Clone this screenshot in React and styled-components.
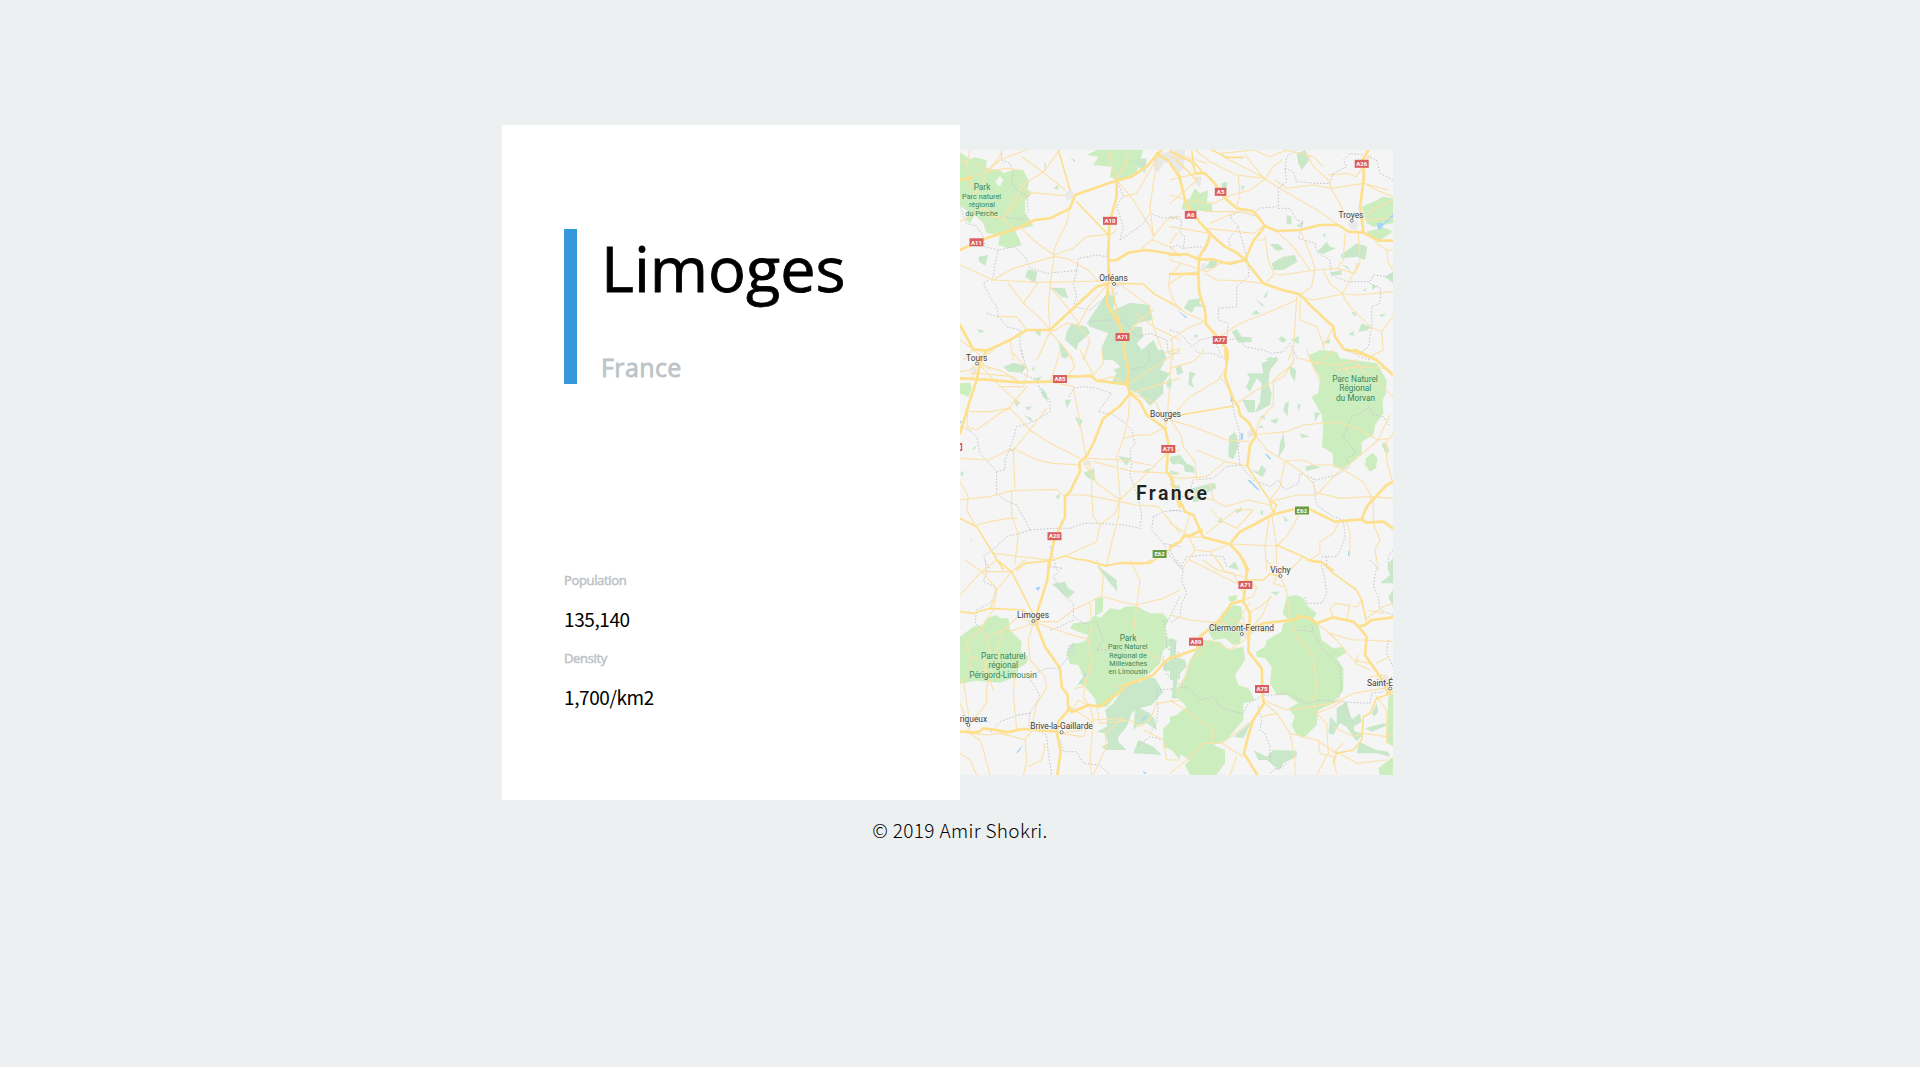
import React from "react";
import styled, { createGlobalStyle } from "styled-components";

const GlobalStyle = createGlobalStyle`
  *, *::before, *::after { box-sizing: border-box; }
  body {
    margin: 0;
    background: #ecf0f1;
    color: #000;
    font-family: "Noto Sans CJK JP", "Open Sans", sans-serif;
  }
`;

const Page = styled.main`
  display: flex;
  flex-direction: column;
  align-items: center;
  min-height: 1067px;
  padding-top: 125px;
`;

const Showcase = styled.section`
  display: flex;
  align-items: center;
  width: 916px;
`;

const Card = styled.article`
  display: flex;
  flex-direction: column;
  justify-content: space-between;
  width: 458px;
  height: 675px;
  padding: 104px 62px 77px;
  background: #fff;
`;

const Heading = styled.header`
  display: flex;
  flex-direction: column;
  justify-content: space-between;
  height: 155px;
  padding-left: 24px;
  border-left: 13px solid #3498db;
`;

const City = styled.h1`
  margin: 0;
  font-family: "Open Sans", sans-serif;
  font-size: 63px;
  font-weight: 400;
  line-height: 78px;
  -webkit-text-stroke: 0.8px #000;
`;

const Country = styled.h2`
  margin: 0;
  color: #bdc3c7;
  font-family: "Open Sans", sans-serif;
  font-size: 25px;
  font-weight: 400;
  line-height: 33px;
  letter-spacing: 0.4px;
  -webkit-text-stroke: 0.8px #bdc3c7;
`;

const Facts = styled.dl`
  margin: 0;
`;

const Label = styled.dt`
  height: 39px;
  color: #bdc3c7;
  font-family: "Open Sans", sans-serif;
  font-size: 13px;
  font-weight: 400;
  line-height: 26px;
  letter-spacing: -0.35px;
  -webkit-text-stroke: 0.5px #bdc3c7;
`;

const Value = styled.dd`
  height: 39px;
  margin: 0;
  font-size: 19px;
  font-weight: 400;
  line-height: 26px;
  letter-spacing: -0.4px;
`;

const Footer = styled.footer`
  padding-top: 15px;
  font-size: 19px;
  font-weight: 300;
  line-height: 30px;
  letter-spacing: 0.35px;
`;

const MapFrame = styled.svg`
  display: block;
  width: 433px;
  height: 625px;
  background: #f5f5f5;
  font-family: Roboto, sans-serif;
`;

const Fill = styled.path`
  fill: ${(p) => p.$tone};
`;

const Road = styled.path`
  fill: none;
  stroke: ${(p) => (p.$major ? "#fddf8c" : "#fbe2ab")};
  stroke-width: ${(p) => p.$w};
  stroke-linejoin: round;
  stroke-linecap: round;
`;

const Border = styled.path`
  fill: none;
  stroke: #c6c6cc;
  stroke-width: 3;
  stroke-dasharray: 5 5;
  stroke-linejoin: round;
`;

const MapText = styled.text`
  fill: ${(p) => (p.$park ? "#38875a" : "#3c3c3c")};
  stroke: ${(p) => (p.$park ? "none" : "#f7f7f7")};
  stroke-width: 0.8px;
  paint-order: stroke;
  font-size: ${(p) => p.$size || 8.4}px;
  text-anchor: middle;
`;

const CountryText = styled.text`
  fill: #222;
  stroke: #fafafa;
  stroke-width: 1px;
  paint-order: stroke;
  font-size: 19.5px;
  font-weight: 600;
`;

const ShieldText = styled.text`
  fill: #fff;
  font-size: 6px;
  font-weight: 700;
  text-anchor: middle;
`;

// Survey sheets: each is drawn at three units to the pixel from its own origin.
const sheets = [
  {
    x: -10, y: -10,
    park: "M30 38L62 58L75 52L110 60L108 85L150 90L160 100L190 90L220 90L237 125L232 150L245 155L240 168L225 180L225 220L240 240L250 258L195 270L215 315L175 325L145 315L150 285L110 280L100 250L75 225L60 250L48 240L55 215L30 195ZM150 108L135 125L150 140L160 120ZM410 45L440 30L580 30L560 95L510 125L480 110L485 80L430 75L445 50Z",
    forest: "M85 350L115 345L105 378L88 365ZM235 388L262 395L255 430L225 410ZM303 443L345 445L355 475L335 470ZM430 520L470 460L495 470L490 510L540 488L600 495L607 540L560 550L545 560L575 560L580 590L560 610L575 630L610 600L640 660L460 660L455 620L475 580L420 560L410 550ZM365 550L410 560L420 580L385 610L380 630L345 600L350 575ZM325 600L358 645L335 655ZM255 575L275 565L270 590ZM80 568L105 572L90 580ZM310 143L325 135L325 150ZM282 70L288 70L286 95ZM545 60L590 55L585 100Z",
    urban: "M345 160L365 148L375 175L350 182ZM490 432L525 425L520 440L495 442ZM610 45L660 35L690 30L690 60L640 70L625 97L612 90ZM486 458L505 452L502 470Z",
    water: "M412 492L435 465L430 472ZM355 550L372 545ZM360 52L376 62L374 65Z",
    major: "M30 330L100 298L210 262L255 240L300 235L360 205L375 165L480 128L545 110L590 80L625 40L635 30M500 118L500 170L478 250L475 350L475 430L470 490L510 560L522 600L522 660M475 430L440 440L305 565L300 570L230 570L180 600L110 632L70 628L30 555M475 362L500 360L535 338L590 330L690 345M620 40L660 65L690 110M30 120L62 112",
    mid: "M325 30L360 150M380 185L475 285M475 430L580 432L610 460L690 505M485 440L500 510L510 560M475 370L485 430",
    minor: "M30 58L50 70L60 30M60 30L50 80L62 112L60 150M215 50L280 97L345 150M75 65L110 95L150 50L155 30M110 95L90 150L60 170M110 95L150 60L215 35L230 30M110 95L170 85L210 90M60 112L110 95M170 215L225 130L280 97L325 35M120 230L160 235L215 175L240 158L345 167M205 130L240 158M30 245L100 205L160 240L195 265M360 200L350 250L320 310L310 340L312 350M215 265L250 300L290 330L312 345M312 350L190 385L125 422M312 350L350 355L415 390L445 425M312 345L370 325L410 290L475 283M30 375L130 420L265 427L470 423M312 350L300 440L295 500L300 570M175 430L220 490L265 530L300 570M220 490L265 427M300 440L350 500L380 540L385 560M475 430L415 500L385 555L350 550L305 575M525 30L530 70L500 115M480 30L485 80L500 115M625 45L610 130L600 200L610 290L650 240L690 230M520 170L560 160L620 55M500 120L550 180L600 260L610 290M610 295L570 330M605 300L660 320L690 350M690 375L660 405L655 440L670 480L690 510M500 270L475 290M520 440L600 500L610 560L690 600M180 600L190 660M300 575L280 620L260 660M300 575L340 620L370 660M230 570L200 530L145 530M30 600L70 628L105 660M40 660L70 628M385 555L420 600L400 660M560 520L610 560L640 640L690 625M525 590L570 540L610 510",
    border: "M155 40L155 60L180 70L190 100L185 130L205 155L230 165L235 215L215 240L160 230L135 240M30 200L50 250L80 258L100 290L105 320L145 330L195 320L225 350L240 385L290 400L340 395L380 392L385 355L440 345L470 350L475 300M145 330L135 370L130 410L100 430L120 470L140 500L145 530L110 520M380 392L370 430L380 470L370 500L420 510L480 460L510 430M510 300L520 260L500 200L520 165L500 120M510 300L575 255L600 220L640 235L680 230M145 530L170 560L210 570L210 620L220 660M420 545L470 540L520 540L560 590L600 580L650 600L655 640L690 640",
  },
  {
    x: 210, y: -10,
    park: "M75 145L90 160L115 150L110 190L125 193L128 215L35 208L40 185L60 175ZM575 200L610 185L640 170L669 175L669 250L610 260L590 250ZM590 275L640 262L669 275L620 305L600 290ZM5 50L35 60L30 70L8 65Z",
    forest: "M380 40L405 30L418 60L395 90L385 70ZM155 130L172 125L168 155L155 150ZM213 135L225 140L216 152ZM350 225L365 230L365 255L350 250ZM378 258L400 243L395 262ZM300 312L325 312L342 328L320 333ZM305 370L340 350L375 345L382 365L340 390L310 390ZM442 335L470 305L480 320L498 325L460 342ZM512 345L560 310L592 320L585 360L560 350L515 355ZM457 285L468 278L465 293ZM515 375L530 378L545 395ZM480 398L515 390L515 405L485 405ZM645 410L669 395L669 430ZM105 385L120 362L145 362L135 385ZM42 505L55 480L90 475L88 492L115 500L75 500L65 518ZM280 470L295 450L288 475ZM255 475L285 498L275 498ZM243 525L258 510L272 522ZM185 575L200 567L215 590L245 592L245 605L205 608ZM325 598L335 588L350 600L338 608ZM362 600L386 588L387 612ZM565 575L575 550L602 562L590 572ZM535 583L550 573L553 588ZM455 610L480 595L480 610ZM543 515L560 518L555 530ZM627 525L650 520L635 532ZM605 435L622 438L608 450ZM576 452L590 443L587 454ZM68 587L84 583L82 594ZM555 370L568 372L560 375ZM417 645L450 632L500 640L500 660L420 660ZM285 660L300 650L325 658Z",
    urban: "M15 30L45 30L40 90L20 100L0 70L0 45ZM75 110L95 110L90 145L78 130ZM535 250L565 240L560 270L540 265ZM95 372L108 368L105 395L93 390Z",
    water: "M622 248L640 250L669 222L669 235L645 250L630 270L622 265ZM20 510L52 532L48 535Z",
    major: "M0 70L28 110L48 190L90 248L130 290L165 320L200 338L225 360L280 430L330 448L390 463L430 505L490 560L495 590L522 628L560 635L620 660M75 100L105 100L130 125L165 175L200 205L250 213L285 258L320 273L390 270L450 255L505 255L535 275L580 278L625 302L669 302M285 258L250 303L225 360L180 372L125 358L85 358L50 342L0 345M118 290L110 315L88 350L85 400L88 460L105 510L108 552L150 600L172 630L173 660M595 30L578 60L582 110L570 200L580 275M0 402L85 402",
    mid: "M0 35L75 70L100 100M65 30L75 100M125 30L170 52L220 52M20 60L80 120",
    minor: "M0 50L60 60L80 100L0 120M0 30L30 45L110 70M75 30L120 65L200 105L285 115M160 50L285 115M155 40L250 30L300 50L350 30M285 118L225 45M285 118L310 80L335 60M285 118L330 145L405 190L450 215L505 255M170 170L240 150L285 118M205 110L210 160L200 200M0 190L60 140L80 120M0 165L50 180L130 190L165 175M105 215L200 215L265 225L280 250M20 280L0 310M120 280L0 260M110 270L120 300L105 330M120 250L200 215M110 265L250 280L280 258M350 145L430 135L485 145L580 130L655 150M350 145L315 120M485 150L510 190L530 240M485 150L475 120L430 80L410 40M475 105L530 100L560 110L600 45M582 130L620 150L669 170M345 30L430 50L460 80M580 240L669 235M669 180L600 215L570 240M390 270L420 340L435 385L425 440L390 465M320 275L370 320L420 390M285 290L295 360L310 400L330 405M285 300L265 300M310 405L290 425M330 405L440 390L500 385L520 360L525 280M565 280L570 370L555 400L500 385M565 370L540 420L518 460M460 392L480 430L518 462L560 465L669 455M518 462L430 480L390 470M669 330L650 330L620 310M650 330L655 370L669 390M105 400L140 420L210 422L280 430M110 395L150 370L225 360M0 360L50 375L110 395M0 485L50 520L105 545M150 590L210 550L300 515L380 480M380 470L375 560L370 620L355 660M390 480L390 540L440 560L455 600L470 660M490 560L460 620M518 465L540 500L600 560L635 575L640 630L600 650L560 640M635 575L669 530M0 600L60 560L105 545M10 660L5 600M0 430L45 400L90 395",
    border: "M380 30L350 50L345 85L370 95L380 125L440 130L480 130L490 100L530 80L520 60L540 40L580 45L620 60L630 100L669 120M345 85L350 125L325 145L325 200L265 205L250 230L215 210L180 230L205 260L175 300L180 320M325 205L360 205L380 240L400 245L385 295L435 310L440 335L480 360L485 405L530 425L600 425L610 405L650 410L669 400M600 430L632 445L630 490L605 500L605 560L595 620L570 640M0 230L35 240L30 280L45 290L40 325L90 320L110 325M0 325L20 315L40 325M205 260L235 370L235 410L200 440L200 500L145 505L145 540L175 550L170 600L210 595L225 620L280 630L305 640L340 635L360 610L385 660M0 570L30 580L65 620L90 600L130 590L150 640L165 660",
  },
  {
    x: -10, y: 200,
    park: "M30 100L60 98L65 115L55 140L30 130Z",
    forest: "M488 30L515 0L640 0L650 25L630 60L660 70L640 100L640 130L600 168L565 130L545 122L530 110L520 100L485 95L500 70L490 60L512 50ZM160 50L190 38L232 48L215 68L175 65ZM340 10L355 18L345 28ZM455 0L475 0L470 10ZM272 110L290 130L295 155L278 140ZM345 150L365 148L350 175ZM375 200L398 210L390 235ZM190 148L210 155L200 172ZM222 195L245 205L245 217ZM225 172L245 168L235 182ZM505 318L542 325L530 347ZM400 370L432 355L435 392L415 385ZM315 440L330 430L327 448ZM580 362L603 355L590 367ZM658 330L690 315L690 335L670 345ZM650 95L662 80L662 112L650 112ZM245 55L255 50L252 65ZM65 300L75 287L78 295ZM30 370L42 362L38 380ZM175 300L200 293L185 305ZM660 365L685 365L670 375ZM658 400L690 408L690 440ZM250 85L275 80L265 95ZM440 650L455 655L450 660Z",
    urban: "M398 335L420 330L425 345L400 345ZM60 55L80 50L75 75Z",
    water: "M30 212L35 215L30 222ZM60 570L66 570L64 574Z",
    major: "M110 0L90 40L80 90L60 150L30 250M30 85L100 88L205 97L300 95L350 80L425 78L440 92L530 103M522 0L535 60L532 105L540 130L570 155L590 195L645 235L655 280L650 365L668 390L670 420L690 470M540 130L510 168L460 205L430 280L410 318L388 338L390 365L360 425L345 440L345 500L312 570L295 660",
    mid: "M30 505L80 530L160 660M200 660L225 640L300 632L345 618L380 628L405 630L465 648L510 638L600 640L690 575M690 190L660 195M330 85L420 75",
    minor: "M30 65L60 60L85 35L130 0M60 70L90 70L190 80L205 95M95 45L160 65L205 97M80 35L150 110L210 160M150 110L220 110L235 60L190 10M60 185L120 185L175 175L230 110M55 160L50 230L80 240L150 190L180 175M180 175L240 240L300 280L390 325M30 325L115 330L175 300L200 300M195 420L190 300L240 240L290 175M200 300L260 330L310 340L390 345M410 330L370 110L300 95L320 40L330 0M410 330L440 400L510 450M415 325L520 330L600 345M430 335L550 365L690 370M520 265L560 255L600 255L640 235M540 130L535 200L520 265L500 320L510 440L505 500L480 600L470 650M405 340L425 380L425 430L430 500L450 525L495 490L510 450M345 435L400 435L430 440L510 455L555 465L625 470L690 550M345 440L320 418L185 422L120 440L30 450M30 395L55 440L50 480L75 525M80 525L120 515L175 505L200 505M185 422L185 500L205 550L195 640M510 450L560 400L650 310L690 300M430 75L460 40L455 0M390 0L430 75M350 80L375 50L350 0M130 610L210 620L300 630M345 618L440 575L450 525M530 105L600 60L690 0M540 130L690 85M665 0L660 100L650 220M545 130L620 160L650 235M450 90L490 80L530 100M80 60L60 90M85 30L120 60M30 230L60 240",
    border: "M215 0L225 40L215 70L260 90L275 130L300 150L300 185L260 210L235 220L200 230L185 280L165 330L165 360L140 365L110 330L90 310L80 260L50 235M140 365L140 430L165 450L200 465L230 520L240 540L210 550L170 560L140 590L100 620L120 660M240 540L310 535L340 535L360 535L400 520L450 520L520 525L570 535L575 490L560 430L540 375L545 340L540 300L555 280L545 240L520 215L490 195L445 185L470 150L485 130L440 115L400 110L370 115L355 145M610 500L640 485L690 480M610 500L605 540L640 580L690 590M640 580L660 620L690 650M300 590L310 620L320 660M535 60L580 50L600 30L595 0",
  },
  {
    x: 210, y: 200,
    park: "M415 20L450 0L500 5L510 25L550 30L620 40L650 90L648 130L638 150L640 190L615 225L610 255L575 275L575 310L520 360L490 350L488 310L455 290L460 240L455 195L425 140L445 130L450 80L430 50ZM588 325L608 308L622 325L618 355L600 365L585 345ZM655 640L669 625L669 660L655 655Z",
    forest: "M275 40L320 20L325 30L300 60L295 100L305 130L300 165L255 188L270 155L275 100L260 85L240 125L228 110L240 85L230 70L280 70ZM217 150L255 150L255 185L235 188ZM358 45L378 60L375 95L362 75ZM345 160L357 152L352 200L340 180ZM268 200L283 195L285 210ZM300 212L326 203L318 222ZM270 225L283 232L268 235ZM433 185L450 190L435 215ZM382 160L392 165L385 185ZM185 190L175 240L178 225ZM177 260L195 245L202 260L205 290L190 328L175 322ZM340 245L345 290L325 325L330 280ZM390 250L420 260L395 263ZM405 350L425 345L455 352L410 363ZM243 360L265 365L275 345L288 360L278 382ZM0 320L30 315L50 340L72 350L75 368L45 365L40 345L0 335ZM65 415L135 398L138 415L95 435L85 455L68 455L75 430ZM18 55L30 45L40 68L22 75ZM58 65L77 70L65 90L72 115L55 103ZM195 485L215 470L215 482L200 490ZM142 515L155 500L155 520ZM268 485L280 480L278 497ZM338 495L355 512L345 515ZM175 650L195 635L207 660ZM635 285L642 275L658 300L650 315ZM0 75L5 100L0 120ZM0 360L25 370L20 375L0 370Z",
    urban: "M230 245L255 235L260 255L235 263Z",
    water: "M150 78L165 45L160 55ZM182 130L188 130L192 155L182 155ZM212 250L220 250L218 270L212 270ZM285 312L292 313L305 328L298 328ZM232 390L240 390L272 422L260 418ZM534 602L538 602L538 618L534 618Z",
    major: "M165 0L170 40L165 80L190 150L205 170L210 195L238 220L258 258L240 285L232 348M0 375L15 420L45 485L70 495L100 562L150 575L180 582L210 615L235 660M555 0L620 30L669 75M0 590L30 575L40 560L65 555L95 540M575 508L590 518L640 515L669 535M185 575L210 545L250 525L305 495L370 478M420 478L495 515L575 508L590 470L650 405L669 395",
    mid: "M0 200L190 168M232 348L265 400L300 452L320 465L310 490L300 455M400 620L425 635L455 638L490 660M320 585L400 620",
    minor: "M0 205L60 140L145 90L165 60M0 55L70 35L95 10L100 0M0 210L70 230L170 270L240 275M35 265L40 290L75 335L80 390M0 205L35 260M0 380L30 385L110 380L165 335L232 348M165 335L80 300M240 255L350 245L400 225L500 215L560 235L625 270M258 255L265 215L310 165L310 90L370 40L370 0M200 160L260 120L340 80L370 35M410 0L430 50L450 90M390 25L440 40L470 20L490 0M440 40L500 45L560 30M510 40L560 90M555 30L575 60L620 95L669 140M500 60L560 50L650 55M258 258L290 300L345 333L400 330L430 345L490 345L520 360M345 333L330 410L300 450M345 333L400 370L430 400L440 435M440 435L500 370L560 325L625 270M520 360L580 395L605 440L590 480M450 430L510 445L605 440L669 445M300 455L380 435L440 435M625 270L660 265L669 250M650 270L650 330L660 370L669 400M120 400L130 450L165 470L235 450L300 465M55 420L90 440L130 450M125 480L150 510L200 535L250 480L200 478L110 550M0 520L55 555L75 600L120 605L180 582M180 582L320 588L350 560L385 500L370 480M300 490L285 590L290 660M305 490L318 580L320 640M400 620L360 660M510 510L490 550L450 575L450 610L420 630M530 515L540 550L540 620M610 440L610 520L630 570L615 600L625 660M660 195L640 235L625 270M100 562L40 560L60 490M75 600L35 660M120 605L150 640L160 660",
    border: "M75 0L90 10L130 10L155 25M150 80L180 120L195 200L210 250L205 300L210 345L170 350L130 385L70 390L55 440L0 440M210 345L250 390L300 410L325 390L345 420L385 400L390 370L430 385L435 440L440 465L490 500L520 510L525 560L515 590L500 620L455 620M435 390L500 375L540 350L530 325L560 310L520 260L545 200L570 190L600 170L610 195L640 200L660 230M0 480L40 485L55 490M0 600L20 640L30 655L50 620L110 615L160 620L170 650M470 620L470 660M669 600L655 620L655 660M530 0L570 20L600 30",
  },
  {
    x: -10, y: 410,
    park: "M30 230L70 200L100 195L110 175L140 165L150 175L175 175L180 210L215 245L212 275L235 290L230 310L205 325L200 350L150 368L75 362L30 372ZM435 115L460 112L458 155L435 168ZM370 190L415 185L435 165L450 175L480 145L510 150L525 140L560 138L580 150L600 160L640 160L655 180L645 205L650 230L670 250L640 270L630 310L600 340L560 365L530 370L500 405L470 440L440 440L435 415L405 380L385 370L400 350L385 315L360 312L350 280L365 250L385 250L410 240L415 225L385 215L360 205ZM640 505L690 460L690 600L665 570L640 560Z",
    forest: "M305 72L345 65L355 85L375 95L355 115ZM440 15L500 60L502 95L480 70ZM365 255L378 253L372 282L350 280ZM530 370L575 365L590 350L615 355L640 395L605 435L570 445L600 460L615 480L620 510L590 490L565 495L550 510L555 450L545 460L530 500L505 530L505 545L530 570L470 570L455 560L475 550L465 520L440 515L470 500L470 470L465 450L490 430ZM565 540L610 560L635 585L550 580ZM640 300L690 310L690 360L665 335L640 330ZM665 385L690 385L690 415L672 415Z",
    urban: "M235 185L265 178L265 195L245 200ZM298 502L325 505L325 520L300 518Z",
    water: "M258 82L272 80L265 92L258 88ZM380 380L402 350L395 365ZM195 582L218 555L210 572ZM570 488L592 462L588 475ZM578 632L592 640L583 642ZM400 345L412 340L405 350Z",
    major: "M298 0L292 60L262 155L258 190L285 260L330 325L335 380L353 405L355 450L325 485L320 515L332 575L322 645M30 515L85 517L100 505L150 512L170 517L220 507L320 515M355 440L365 457L415 435L450 440L510 395L530 375L610 345L640 310L665 290L690 288",
    mid: "M140 0L185 35L258 180M30 155L70 160L120 145L220 150L258 185M405 0L470 17L510 10L580 12L605 0",
    minor: "M30 105L95 35L140 0M45 0L95 35L140 85L120 150M95 35L185 35L225 0M185 35L140 90L130 150L95 200L110 240L120 280L100 340M95 200L50 250L60 290L100 300L130 390M55 260L65 340L30 370M115 230L160 210L205 170L240 185M175 215L210 205L250 190M250 190L235 240L240 300L285 350L290 385L260 430L245 500M262 185L325 185L370 150L455 108M262 190L350 220L415 238L425 310L400 380L375 385M418 235L425 190L420 130M455 108L510 125L560 135L640 115L690 90M455 108L460 50L440 0M560 135L550 220L580 270L610 290L640 300M560 135L570 60L540 0M110 385L110 430L60 490M195 340L190 400L200 510M40 360L60 490M30 430L55 490M60 500L50 515L90 540L100 570L120 645M60 520L115 525L180 515M250 510L225 535L230 605L220 645M230 540L150 520M280 550L285 560L275 600L235 620M325 520L400 530L420 480L350 435M365 457L385 420L410 435M420 440L430 480L520 475M520 475L465 520L470 560L430 645M430 480L400 510L330 520M440 440L450 490L540 480L570 500M430 480L420 600L425 645M30 580L60 600L80 645M30 480L55 490M570 500L600 480L620 430L690 420M580 510L640 540L650 600L690 600M160 210L140 270L110 385M420 310L400 410L415 435M500 380L560 360L600 350",
    border: "M105 0L110 40L100 65L135 80L135 110L120 130L80 150L75 190L110 220M335 25L310 50L340 105L370 130L370 170L400 190L440 185L460 240L440 270L490 270L530 270M300 20L340 25M370 180L330 200L300 210M240 460L270 410L255 380L235 350L290 325L325 325L350 300L355 260L375 250M240 460L205 465L150 485L120 520M205 465L240 460L235 500L290 525L295 580L305 645M330 540L340 575L380 575L400 610L450 615L480 645M640 180L650 220L650 265L690 280M690 110L650 190M640 290L650 345L690 375M620 430L620 390L690 385M600 520L620 490L625 430M640 540L600 530L560 560",
  },
  {
    x: 210, y: 410,
    park: "M350 110L380 105L400 115L410 135L440 160L430 175L445 195L455 240L490 265L520 260L528 278L500 295L520 325L520 390L490 430L445 450L440 495L400 535L380 525L365 495L375 470L355 445L385 430L350 405L320 405L300 370L305 320L285 295L260 290L258 275L285 260L290 240L335 215L340 190L360 185L338 160ZM175 110L200 105L200 120L178 125ZM155 160L190 135L215 140L215 175L205 190L215 220L210 250L190 255L165 235L130 240L115 215L150 180ZM65 290L100 240L150 245L175 270L220 260L225 300L195 345L205 375L235 385L255 420L220 430L220 480L170 540L130 555L165 570L165 610L140 645L60 645L45 615L60 600L0 565L0 470L20 465L50 440L10 400L45 350ZM625 625L669 590L669 645L630 645ZM655 410L669 400L669 560L650 545Z",
    forest: "M0 235L20 240L15 290L45 300L50 320L25 345L15 415L5 415L10 360L0 360ZM250 570L290 590L310 570L380 572L380 590L340 610L330 630L290 600L265 600ZM300 95L328 95L320 107ZM175 22L195 8L200 28ZM655 30L669 0L669 70L630 70L660 45ZM655 110L669 90L669 140ZM500 445L530 425L545 480L570 460L575 485L550 500L555 515L580 520L560 545L530 500L510 490L490 525L475 520L480 470L500 490ZM585 505L640 490L655 495L605 515ZM568 545L620 570L655 575L660 590L620 580L560 580ZM605 460L620 430L625 455L612 470ZM190 530L245 485L220 535Z",
    urban: "M205 205L260 210L235 235L210 230ZM630 340L655 350L655 400L640 390Z",
    water: "",
    major: "M220 0L230 30L228 65L220 125L240 160L235 275L275 325L278 410L282 430L250 480L235 525L222 580L262 645M0 295L80 268L90 230L150 178L185 130L220 122M235 210L280 190L380 178L385 168L420 175L440 190L490 172L550 185L565 200L590 230L585 285L620 335L660 402M565 200L585 195L605 180L669 172",
    mid: "M410 0L455 5L490 40L560 90L575 120L590 190M228 60L280 60L300 42L330 48M660 402L620 415L600 460L580 470L575 540L550 570L500 580L490 610M650 400L669 395M235 210L300 215",
    minor: "M330 45L290 0M330 48L350 90L360 180L380 230L430 290L440 380L430 430L440 460L470 490L475 580L440 645M140 0L165 35L190 40L225 110M100 0L140 30L220 50M60 0L130 35L200 70L225 60M320 50L310 70L340 80M220 120L250 110L260 80L230 60M235 160L270 140L305 110M245 205L280 160L300 110M0 165L60 180L160 190L215 215M180 180L215 190L235 210M165 185L130 200L90 225M235 230L210 250L180 270L120 240L90 280L60 300L45 350L20 400M0 420L60 460L100 490L125 500L130 550L100 550L50 600L0 640M130 550L155 550L220 590M155 550L250 480M200 590L180 645M285 430L320 460L360 520L440 540L500 580M290 425L350 450L430 440L490 430L550 400L640 385M275 470L320 460M440 190L480 220L550 240L585 240M455 200L500 240L550 300L600 310M490 170L480 150L495 130L560 140L575 120M590 175L640 140L669 130M590 150L640 160M530 180L540 130M590 240L669 245M565 285L555 310L600 330M600 350L650 345M620 310L660 290M440 460L490 440L520 420M490 500L550 530L575 520M500 575L560 610L650 600M580 520L650 530L669 520M620 410L650 450L650 550M360 520L375 600L375 645M445 540L450 580L490 590L500 645M0 640L50 600M235 240L225 200L215 160L240 130M490 580L520 550",
    border: "M20 0L40 30L35 60L50 100L35 130L30 170L0 190M455 15L465 60L470 100L455 130L410 130L405 110M380 210L430 215L425 190M430 220L460 270L510 320L515 390L500 425L450 420L410 430L355 400L310 405L280 405L235 430L220 460L190 455L150 440L130 410L90 420L50 380L20 385M500 425L600 430L605 400L640 395M600 0L620 20L610 80L625 110L630 150L669 165M265 440L275 480L270 510L285 520L300 560L300 600L320 630L350 610M525 430L530 460L550 480M655 240L650 280L669 320M0 240L15 250L15 300M300 640L320 625",
  },
];

const shields = [
  [1110, 220.8, "A10"], [976.5, 242.3, "A11"], [1122.5, 337, "A71"], [1220.6, 191.8, "A5"],
  [1190.6, 214.8, "A6"], [1361.7, 163.8, "A26"], [1219.8, 340, "A77"], [1060, 379, "A85"],
  [1168.3, 449, "A71"], [1054.5, 536.2, "A20"], [1245.4, 585, "A71"],
  [1196, 641.7, "A89"], [1262, 689, "A75"],
  [1159.6, 554, "E62", true], [1302, 510.5, "E62", true],
];

const places = [
  ["Orléans", 1113.5, 280.5, 1114, 284], ["Troyes", 1351, 218.3, 1351.7, 220.5],
  ["Tours", 976.7, 360.5, 977, 363.5], ["Bourges", 1165.5, 416.5, 1166, 419.5],
  ["Limoges", 1033, 617.6, 1033.3, 621], ["Vichy", 1280.4, 572.6, 1280.4, 576],
  ["Clermont-Ferrand", 1241.5, 630.9, 1241.8, 634], ["Brive-la-Gaillarde", 1061.5, 728.6, 1061.6, 732.3],
  ["rigueux", 973.4, 721.8, 968.4, 725], ["Saint-É", 1380, 685.5, 1390.3, 688.5],
];

const parks = [
  ["Park", 982, 190.3, 8.3], ["Parc naturel", 981.6, 198.7, 7.3], ["régional", 982, 207.3, 7.3], ["du Perche", 981.6, 215.5, 7.3],
  ["Parc Naturel", 1355, 381.7, 8.3], ["Régional", 1355.3, 391.2, 8.3], ["du Morvan", 1355.5, 400.5, 8.3],
  ["Parc naturel", 1003.3, 659, 8.3], ["régional", 1003.3, 668.3, 8.3], ["Périgord-Limousin", 1003, 677.6, 8.3],
  ["Park", 1128, 640.6, 8.3], ["Parc Naturel", 1127.7, 649.3, 7.2], ["Régional de", 1128, 657.7, 7.2], ["Millevaches", 1128.3, 666, 7.2], ["en Limousin", 1128, 674.3, 7.2],
];

function Sheet({ sheet }) {
  return (
    <g transform={`translate(${sheet.x} ${sheet.y}) scale(0.33333)`}>
      <Fill $tone="#ccedbe" d={sheet.park} />
      <Fill $tone="#c9e8ca" d={sheet.forest} />
      <Fill $tone="#e9e9e9" d={sheet.urban} />
      <Fill $tone="#a5d4fb" d={sheet.water} />
      <Border d={sheet.border} />
      <Road $w={3.4} d={sheet.minor} />
      <Road $w={4.8} $major d={sheet.mid} />
      <Road $w={8} $major d={sheet.major} />
    </g>
  );
}

function Shield({ x, y, text, green }) {
  const width = text.length > 2 ? 14 : 11.6;
  return (
    <g>
      <rect x={x - width / 2} y={y - 4} width={width} height="8" fill={green ? "#679d3e" : "#d95f60"} />
      <ShieldText x={x} y={y + 2.2}>{text}</ShieldText>
    </g>
  );
}

function RegionMap() {
  return (
    <MapFrame viewBox="0 0 433 625" role="img" aria-label="Map of central France">
      {sheets.map((sheet) => (
        <Sheet key={`${sheet.x}:${sheet.y}`} sheet={sheet} />
      ))}
      <g transform="translate(-960 -150)">
        <rect x="960" y="443" width="2.2" height="8" fill="#d95f60" />
        <rect x="960" y="445" width="0.8" height="4.3" fill="#fff" />
        {shields.map(([x, y, text, green]) => (
          <Shield key={`${x}`} x={x} y={y} text={text} green={green} />
        ))}
        {parks.map(([text, x, y, size]) => (
          <MapText key={`${x}:${y}`} $park $size={size} x={x} y={y}>{text}</MapText>
        ))}
        {places.map(([text, x, y, cx, cy]) => (
          <g key={text}>
            <circle cx={cx} cy={cy} r="1.5" fill="#fff" stroke="#555" strokeWidth="0.8" />
            <MapText x={x} y={y}>{text}</MapText>
          </g>
        ))}
        <CountryText x="1136" y="500" textLength="71" lengthAdjust="spacing">France</CountryText>
      </g>
    </MapFrame>
  );
}

export default function App() {
  return (
    <>
      <GlobalStyle />
      <Page>
        <Showcase>
          <Card>
            <Heading>
              <City>Limoges</City>
              <Country>France</Country>
            </Heading>
            <Facts>
              <Label>Population</Label>
              <Value>135,140</Value>
              <Label>Density</Label>
              <Value>1,700/km2</Value>
            </Facts>
          </Card>
          <RegionMap />
        </Showcase>
        <Footer>© 2019 Amir Shokri.</Footer>
      </Page>
    </>
  );
}
